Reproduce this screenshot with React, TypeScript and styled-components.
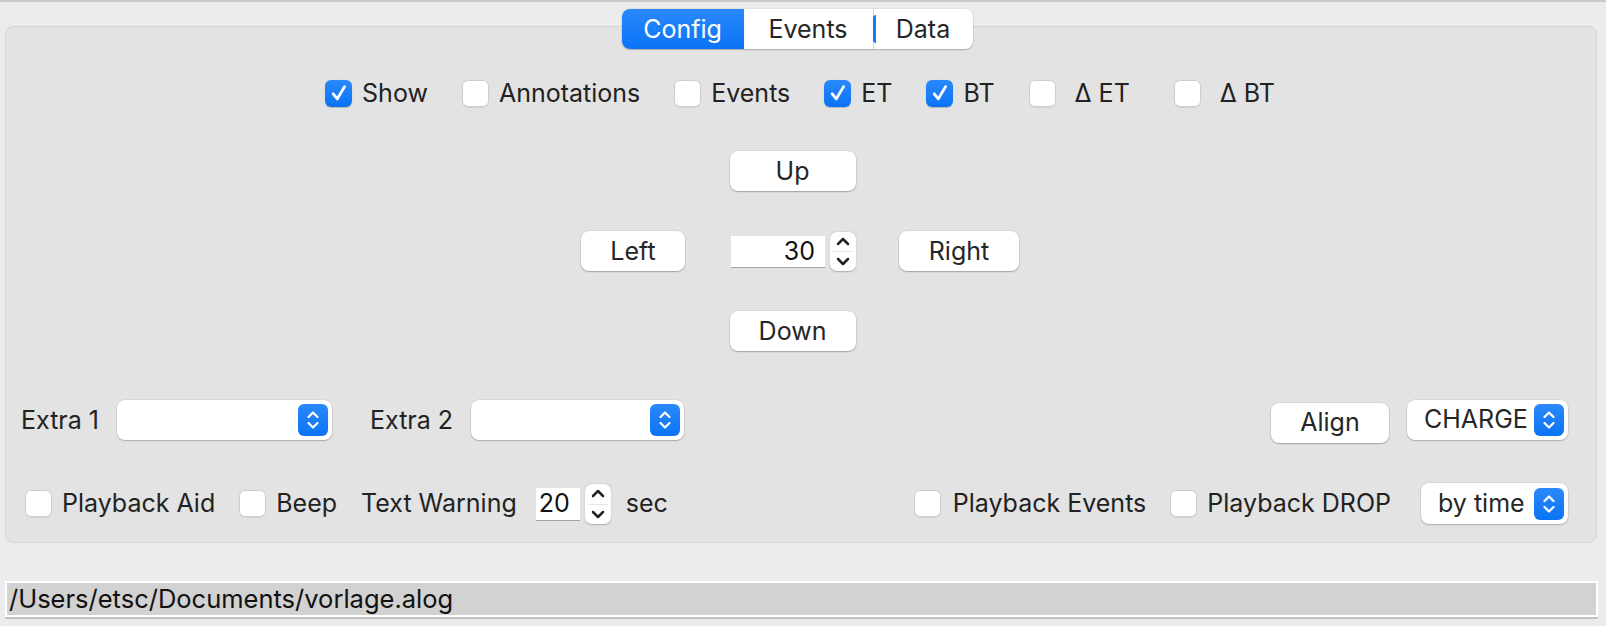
import React from "react";
import styled, { createGlobalStyle, css } from "styled-components";

const GlobalStyle = createGlobalStyle`
  html, body { margin: 0; padding: 0; background: #ececec; }
  body { font-family: Inter, "Noto Sans", "Liberation Sans", sans-serif; color: #222; }
  * { box-sizing: border-box; }
`;

const Page = styled.div`
  width: 1606px;
  height: 626px;
  background: #ececec;
  border-top: 2px solid #c9c9c9;
  display: flex;
  flex-direction: column;
  padding: 7px 9px 0 5px;
  font-size: 25px;
  line-height: 1;
  overflow: hidden;
`;

const TabStrip = styled.div`
  display: flex;
  justify-content: center;
  padding-right: 8px;
  position: relative;
  z-index: 1;
  margin-bottom: -23px;
`;

const TabBar = styled.div`
  display: flex;
  height: 40px;
  background: #fff;
  border-radius: 8px;
  box-shadow: 0 1px 1.5px rgba(0, 0, 0, 0.22), 0 0 0 0.5px rgba(0, 0, 0, 0.08);
`;

const Tab = styled.div<{ $active?: boolean; $w: number; $sep?: boolean }>`
  width: ${(p) => p.$w}px;
  display: flex;
  align-items: center;
  justify-content: center;
  position: relative;
  color: #262626;
  ${(p) =>
    p.$active &&
    css`
      background: linear-gradient(#2a88fb, #0b74f5);
      color: #fff;
      border-radius: 8px 0 0 8px;
    `}
  ${(p) =>
    p.$sep &&
    css`
      border-left: 1px solid #d6d6d6;
      &::before {
        content: "";
        position: absolute;
        left: -1px;
        top: 6px;
        bottom: 6px;
        width: 3px;
        border-radius: 4px 0 0 4px;
        background: #1479f6;
      }
    `}
`;

const Panel = styled.div`
  height: 517px;
  background: #e3e3e3;
  border: 1px solid #d5d5d5;
  border-radius: 8px;
  display: flex;
  flex-direction: column;
  align-items: stretch;
  padding: 0 28px 0 15px;
`;

const CheckRow = styled.div`
  margin-top: 52px;
  display: flex;
  justify-content: center;
  gap: 34px;
  height: 28px;
  align-items: center;
  padding-left: 11px;
`;

const CheckItem = styled.label<{ $gap?: number; $trail?: number }>`
  display: flex;
  align-items: center;
  gap: ${(p) => p.$gap ?? 10}px;
  margin-right: ${(p) => p.$trail ?? 0}px;
  white-space: nowrap;
`;

const Box = styled.span<{ $checked?: boolean }>`
  width: 27px;
  height: 27px;
  border-radius: 6px;
  display: flex;
  align-items: center;
  justify-content: center;
  flex: none;
  ${(p) =>
    p.$checked
      ? css`
          background: linear-gradient(#2b89fb, #0a73f5);
          box-shadow: 0 0.5px 1px rgba(0, 0, 0, 0.2);
        `
      : css`
          background: #fff;
          box-shadow: 0 0 0 1px #cdcdcd inset, 0 0.5px 1px rgba(0, 0, 0, 0.08);
        `}
`;

const Center = styled.div<{ $top: number; $shift?: number }>`
  margin-top: ${(p) => p.$top}px;
  display: flex;
  justify-content: center;
  align-items: center;
  padding-left: ${(p) => Math.max(p.$shift ?? 0, 0)}px;
  padding-right: ${(p) => Math.max(-(p.$shift ?? 0), 0)}px;
  height: 40px;
`;

const PushButton = styled.div<{ $w: number }>`
  width: ${(p) => p.$w}px;
  height: 40px;
  background: #fff;
  border-radius: 8px;
  display: flex;
  align-items: center;
  justify-content: center;
  color: #262626;
  box-shadow: 0 1px 1.5px rgba(0, 0, 0, 0.25), 0 0 0 0.5px rgba(0, 0, 0, 0.1);
  flex: none;
`;

const NavRow = styled(Center)`
  gap: 46px;
  & > :last-child {
    margin-left: -3px;
  }
`;

const SpinGroup = styled.div`
  display: flex;
  align-items: center;
  gap: 5px;
`;

const SpinField = styled.div<{ $w: number; $h: number; $right?: boolean }>`
  width: ${(p) => p.$w}px;
  height: ${(p) => p.$h}px;
  background: #fff;
  border-top: 1px solid #e2e2e2;
  border-bottom: 1.5px solid #a4a4a4;
  display: flex;
  align-items: center;
  justify-content: ${(p) => (p.$right ? "flex-end" : "flex-start")};
  padding: ${(p) => (p.$right ? "0 10px 0 0" : "0 0 0 3px")};
  color: #111;
`;

const SpinArrows = styled.div<{ $h: number }>`
  width: 26px;
  height: ${(p) => p.$h}px;
  background: #fff;
  border-radius: 7px;
  box-shadow: 0 0.5px 1.5px rgba(0, 0, 0, 0.25);
  display: flex;
  flex-direction: column;
  align-items: center;
  justify-content: space-between;
  padding: 5px 0;
  position: relative;
  &::after {
    content: "";
    position: absolute;
    left: 3px;
    right: 3px;
    top: 50%;
    height: 1px;
    background: #e6e6e6;
  }
`;

const OptionsRow = styled.div<{ $top: number; $h: number }>`
  margin-top: ${(p) => p.$top}px;
  height: ${(p) => p.$h}px;
  display: flex;
  justify-content: space-between;
  align-items: center;
`;

const Group = styled.div<{ $gap: number; $lead?: number }>`
  display: flex;
  align-items: center;
  gap: ${(p) => p.$gap}px;
  margin-left: ${(p) => p.$lead ?? 0}px;
  white-space: nowrap;
`;

const Caption = styled.span`
  padding-top: 2px;
`;

const Combo = styled.div<{ $w: number; $h?: number; $ml?: number }>`
  width: ${(p) => p.$w}px;
  height: ${(p) => p.$h ?? 40}px;
  margin-left: ${(p) => p.$ml ?? 0}px;
  background: #fff;
  border-radius: 8px;
  box-shadow: 0 1px 1.5px rgba(0, 0, 0, 0.22), 0 0 0 0.5px rgba(0, 0, 0, 0.1);
  display: flex;
  align-items: center;
  justify-content: space-between;
  padding: 0 4px 0 17px;
  color: #262626;
  flex: none;
`;

const ComboArrow = styled.span`
  width: 30px;
  height: 32px;
  border-radius: 6px;
  background: linear-gradient(#2b89fb, #0a73f5);
  display: flex;
  align-items: center;
  justify-content: center;
  flex: none;
`;

const AlignButton = styled(PushButton)`
  align-self: flex-end;
  margin-bottom: -3px;
`;

const PathBar = styled.div`
  margin-top: 38px;
  height: 36px;
  background: #d2d2d2;
  border: 2px solid #fff;
  box-shadow: 0 2px 0 #c2c2c2;
  display: flex;
  align-items: center;
  padding-left: 2px;
  color: #111;
  font-size: 25.5px;
  margin-right: -1px;
`;

const CheckMark = () => (
  <svg width="20" height="20" viewBox="0 0 20 20">
    <path d="M4.2 10.8 L8.3 15.8 L15.6 3.6" fill="none" stroke="#fff" strokeWidth="2.8" strokeLinecap="round" strokeLinejoin="round" />
  </svg>
);

const Chevrons = ({ color }: { color: string }) => (
  <svg width="16" height="24" viewBox="0 0 16 24">
    <path d="M3.5 9 L8 4.5 L12.5 9" fill="none" stroke={color} strokeWidth="2.2" strokeLinecap="round" strokeLinejoin="round" />
    <path d="M3.5 15 L8 19.5 L12.5 15" fill="none" stroke={color} strokeWidth="2.2" strokeLinecap="round" strokeLinejoin="round" />
  </svg>
);

const Chevron = ({ up }: { up?: boolean }) => (
  <svg width="14" height="9" viewBox="0 0 14 9">
    <path d={up ? "M2 7 L7 2 L12 7" : "M2 2 L7 7 L12 2"} fill="none" stroke="#222" strokeWidth="2.5" strokeLinecap="round" strokeLinejoin="round" />
  </svg>
);

type CheckProps = { label: string; checked?: boolean; gap?: number; trail?: number };
const Check = ({ label, checked, gap, trail }: CheckProps) => (
  <CheckItem $gap={gap} $trail={trail}>
    <Box $checked={checked}>{checked && <CheckMark />}</Box>
    <span>{label}</span>
  </CheckItem>
);

const Spin = ({ value, w, h, ah, right }: { value: string; w: number; h: number; ah: number; right?: boolean }) => (
  <SpinGroup>
    <SpinField $w={w} $h={h} $right={right}>
      {value}
    </SpinField>
    <SpinArrows $h={ah}>
      <Chevron up />
      <Chevron />
    </SpinArrows>
  </SpinGroup>
);

const ComboBox = ({ w, h, ml, text }: { w: number; h?: number; ml?: number; text?: string }) => (
  <Combo $w={w} $h={h} $ml={ml}>
    <span>{text}</span>
    <ComboArrow>
      <Chevrons color="#fff" />
    </ComboArrow>
  </Combo>
);

export default function App() {
  return (
    <>
      <GlobalStyle />
      <Page>
        <TabStrip>
          <TabBar>
            <Tab $active $w={122}>Config</Tab>
            <Tab $w={129}>Events</Tab>
            <Tab $w={100} $sep>Data</Tab>
          </TabBar>
        </TabStrip>
        <Panel>
          <CheckRow>
            <Check label="Show" checked />
            <Check label="Annotations" />
            <Check label="Events" />
            <Check label="ET" checked />
            <Check label="BT" checked />
            <Check label="Δ ET" gap={19} trail={10} />
            <Check label="Δ BT" gap={19} />
          </CheckRow>
          <Center $top={44} $shift={-4}>
            <PushButton $w={126}>Up</PushButton>
          </Center>
          <NavRow $top={40} $shift={11}>
            <PushButton $w={104}>Left</PushButton>
            <Spin value="30" w={94} h={33} ah={39} right />
            <PushButton $w={120}>Right</PushButton>
          </NavRow>
          <Center $top={40} $shift={-4}>
            <PushButton $w={126}>Down</PushButton>
          </Center>
          <OptionsRow $top={48} $h={41}>
            <Group $gap={38}>
              <Group $gap={18}>
                <Caption>Extra 1</Caption>
                <ComboBox w={215} />
              </Group>
              <Group $gap={18}>
                <Caption>Extra 2</Caption>
                <ComboBox w={213} />
              </Group>
            </Group>
            <Group $gap={18}>
              <AlignButton $w={118}>Align</AlignButton>
              <ComboBox w={161} text="CHARGE" />
            </Group>
          </OptionsRow>
          <OptionsRow $top={43} $h={41}>
            <Group $gap={24} $lead={4}>
              <Check label="Playback Aid" />
              <Check label="Beep" />
              <Group $gap={19}>
                <span>Text Warning</span>
                <Group $gap={15}>
                  <Spin value="20" w={44} h={34} ah={40} />
                  <span>sec</span>
                </Group>
              </Group>
            </Group>
            <Group $gap={24}>
              <Check label="Playback Events" gap={12} />
              <Check label="Playback DROP" />
              <ComboBox w={147} h={41} ml={6} text="by time" />
            </Group>
          </OptionsRow>
        </Panel>
        <PathBar>/Users/etsc/Documents/vorlage.alog</PathBar>
      </Page>
    </>
  );
}
